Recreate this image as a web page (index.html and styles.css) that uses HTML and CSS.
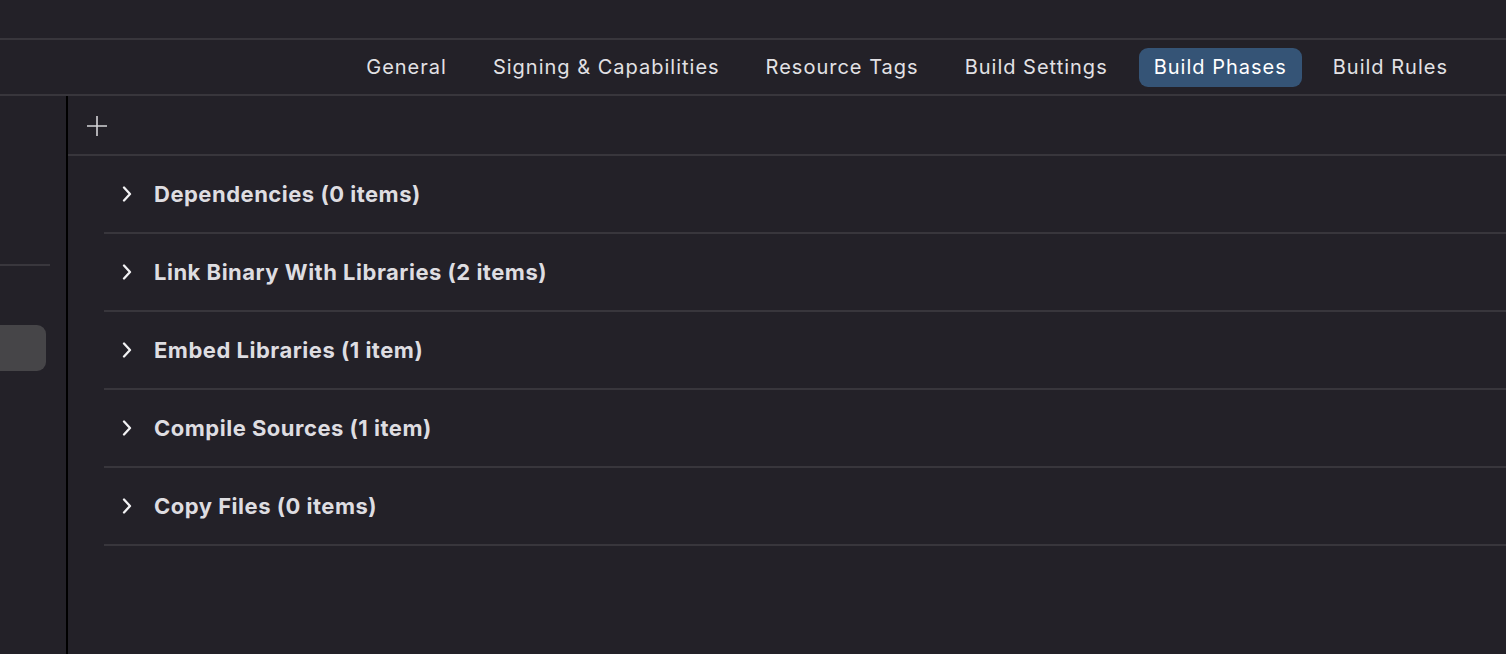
FILE: index.html
```html
<!DOCTYPE html>
<html lang="en">
<head>
<meta charset="utf-8">
<title>Build Phases</title>
<link rel="stylesheet" href="styles.css">
</head>
<body>
<div class="window">
  <div class="titlebar"></div>
  <nav class="tabs">
    <span class="tab">General</span>
    <span class="tab">Signing &amp; Capabilities</span>
    <span class="tab">Resource Tags</span>
    <span class="tab">Build Settings</span>
    <span class="tab tab-active">Build Phases</span>
    <span class="tab">Build Rules</span>
  </nav>
  <div class="main">
    <aside class="sidebar">
      <div class="sidebar-top"></div>
      <div class="sidebar-item"></div>
    </aside>
    <section class="content">
      <div class="toolbar">
        <svg class="plus" width="22" height="22" viewBox="0 0 22 22"><path d="M11 1v20M1 11h20" stroke="#d4d3d6" stroke-width="1.6" fill="none"/></svg>
      </div>
      <ul class="phases">
        <li class="phase"><svg class="chev" width="10" height="16" viewBox="0 0 10 16"><path d="M2 1.5l6 6.5-6 6.5" stroke="#f2f2f4" stroke-width="2.3" fill="none" stroke-linecap="round" stroke-linejoin="round"/></svg><span class="phase-name">Dependencies (0 items)</span></li>
        <li class="phase"><svg class="chev" width="10" height="16" viewBox="0 0 10 16"><path d="M2 1.5l6 6.5-6 6.5" stroke="#f2f2f4" stroke-width="2.3" fill="none" stroke-linecap="round" stroke-linejoin="round"/></svg><span class="phase-name">Link Binary With Libraries (2 items)</span></li>
        <li class="phase"><svg class="chev" width="10" height="16" viewBox="0 0 10 16"><path d="M2 1.5l6 6.5-6 6.5" stroke="#f2f2f4" stroke-width="2.3" fill="none" stroke-linecap="round" stroke-linejoin="round"/></svg><span class="phase-name">Embed Libraries (1 item)</span></li>
        <li class="phase"><svg class="chev" width="10" height="16" viewBox="0 0 10 16"><path d="M2 1.5l6 6.5-6 6.5" stroke="#f2f2f4" stroke-width="2.3" fill="none" stroke-linecap="round" stroke-linejoin="round"/></svg><span class="phase-name">Compile Sources (1 item)</span></li>
        <li class="phase"><svg class="chev" width="10" height="16" viewBox="0 0 10 16"><path d="M2 1.5l6 6.5-6 6.5" stroke="#f2f2f4" stroke-width="2.3" fill="none" stroke-linecap="round" stroke-linejoin="round"/></svg><span class="phase-name">Copy Files (0 items)</span></li>
      </ul>
    </section>
  </div>
</div>
</body>
</html>
```
FILE: styles.css
```css
* { box-sizing: border-box; }
html, body {
  margin: 0;
  padding: 0;
  background: #232128;
  height: 100%;
  overflow: hidden;
}
body {
  font-family: Inter, "Liberation Sans", sans-serif;
  color: #e2e1e5;
}
.window {
  display: flex;
  flex-direction: column;
  height: 654px;
}
.titlebar {
  height: 40px;
  border-bottom: 2px solid #38363c;
  flex: none;
}
.tabs {
  height: 56px;
  flex: none;
  display: flex;
  justify-content: flex-end;
  align-items: center;
  gap: 16px;
  padding-right: 43px;
  border-bottom: 2px solid #38363c;
}
.tab {
  font-size: 20px;
  line-height: 39px;
  height: 39px;
  padding: 0 15px;
  border-radius: 9px;
  letter-spacing: 1px;
}
.tab-active {
  background: #355476;
  color: #ffffff;
}
.main {
  flex: 1;
  display: flex;
  min-height: 0;
}
.sidebar {
  width: 68px;
  flex: none;
  border-right: 2px solid #000;
  padding-top: 168px;
}
.sidebar-top {
  width: 50px;
  border-top: 2px solid #39373d;
}
.sidebar-item {
  margin-top: 59px;
  width: 46px;
  height: 46px;
  background: #464548;
  border-radius: 0 9px 9px 0;
}
.content {
  flex: 1;
  min-width: 0;
}
.toolbar {
  height: 60px;
  border-bottom: 2px solid #38363c;
  display: flex;
  align-items: center;
  padding-left: 18px;
  padding-top: 2px;
}
.plus { display: block; }
.phases {
  list-style: none;
  margin: 0 0 0 36px;
  padding: 0;
}
.phase {
  height: 78px;
  border-bottom: 2px solid #38363c;
  display: flex;
  align-items: center;
  padding-left: 18px;
  padding-bottom: 1px;
}
.chev { display: block; flex: none; }
.phase-name {
  margin-left: 22px;
  font-size: 22px;
  font-weight: 700;
  letter-spacing: 0.5px;
  color: #dedde1;
}
```
